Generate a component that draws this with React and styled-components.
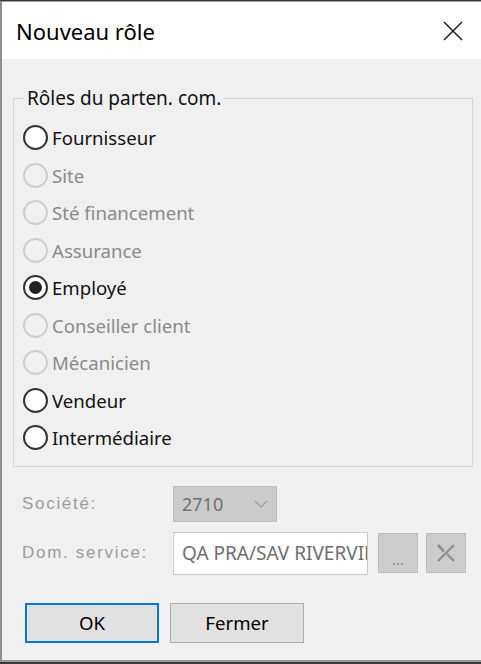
import React from "react";
import styled, { createGlobalStyle } from "styled-components";

const Global = createGlobalStyle`
  html, body { margin: 0; padding: 0; }
  body { background: #3a3a3a; font-family: "Noto Sans", "Open Sans", sans-serif; }
`;

const Screen = styled.div`
  width: 481px;
  height: 664px;
  overflow: hidden;
  padding-top: 1px;
  box-sizing: border-box;
`;

const Window = styled.div`
  height: 661px;
  box-sizing: border-box;
  border-left: 2px solid #8e8e8e;
  border-top: 1px solid #9a9a9a;
  border-bottom: 2px solid #9a9a9a;
  background: #f0f0f0;
  display: flex;
  flex-direction: column;
`;

const TitleBar = styled.div`
  height: 57px;
  flex-shrink: 0;
  background: #ffffff;
  display: flex;
  align-items: center;
  justify-content: space-between;
  padding: 0 18px 0 14px;
`;

const Title = styled.span`
  font-size: 22px;
  color: #000;
`;

const Content = styled.div`
  padding: 29px 8px 0 11px;
  display: flex;
  flex-direction: column;
`;

const Group = styled.fieldset`
  margin: 0;
  min-width: 0;
  border: 1px solid #d7d7d7;
  padding: 11px 9px 9px 9px;
`;

const Legend = styled.legend`
  font-size: 19px;
  line-height: 20px;
  padding: 0 3px;
  margin-left: 1px;
  color: #111;
`;

const Row = styled.div`
  height: 37.5px;
  display: flex;
  align-items: center;
  gap: 4px;
  font-size: 18.6px;
  color: ${(p) => (p.$disabled ? "#8a8a8a" : "#111")};
`;

const Circle = styled.span`
  width: 25px;
  height: 25px;
  box-sizing: border-box;
  border-radius: 50%;
  border: 2px solid ${(p) => (p.$disabled ? "#cdcdcd" : "#333")};
  background: ${(p) => (p.$disabled ? "#f0f0f0" : "#fff")};
  display: flex;
  align-items: center;
  justify-content: center;
  flex-shrink: 0;
`;

const Dot = styled.span`
  width: 13px;
  height: 13px;
  border-radius: 50%;
  background: #222;
`;

const Form = styled.div`
  margin-top: 19px;
  padding-left: 9px;
  display: grid;
  grid-template-columns: 151px 1fr;
  row-gap: 10px;
  align-items: center;
`;

const FieldLabel = styled.span`
  font-family: "Liberation Sans", Arial, sans-serif;
  font-size: 17px;
  letter-spacing: 1.7px;
  color: #9c9c9c;
`;

const Select = styled.div`
  width: 104px;
  height: 36px;
  box-sizing: border-box;
  background: #cbcbcb;
  border: 1px solid #bdbdbd;
  display: flex;
  align-items: center;
  justify-content: space-between;
  padding: 0 8px 0 8px;
  font-size: 18px;
  color: #707070;
`;

const Controls = styled.div`
  display: flex;
  align-items: center;
  height: 43px;
`;

const Input = styled.div`
  width: 195px;
  height: 43px;
  box-sizing: border-box;
  background: #fff;
  border: 1px solid #c9c9c9;
  padding: 0 8px;
  display: flex;
  align-items: center;
  overflow: hidden;
  white-space: nowrap;
  font-size: 19px;
  color: #6e6e6e;
`;

const SmallButton = styled.div`
  width: 40px;
  height: 40px;
  box-sizing: border-box;
  margin-left: ${(p) => p.$gap}px;
  background: #cccccc;
  border: 1px solid #bcbcbc;
  display: flex;
  align-items: center;
  justify-content: center;
  color: #8c8c8c;
`;

const Ellipsis = styled.span`
  font-size: 15px;
  line-height: 1;
  margin-top: 12px;
`;

const Buttons = styled.div`
  margin-top: 28px;
  padding-left: 12px;
  display: flex;
  gap: 11px;
`;

const Button = styled.div`
  width: 134px;
  height: 40px;
  box-sizing: border-box;
  background: #e1e1e1;
  border: ${(p) => (p.$default ? "2px solid #0078d7" : "1px solid #adadad")};
  display: flex;
  align-items: center;
  justify-content: center;
  font-size: 18.6px;
  color: #000;
`;

const roles = [
  { label: "Fournisseur" },
  { label: "Site", disabled: true },
  { label: "Sté financement", disabled: true },
  { label: "Assurance", disabled: true },
  { label: "Employé", checked: true },
  { label: "Conseiller client", disabled: true },
  { label: "Mécanicien", disabled: true },
  { label: "Vendeur" },
  { label: "Intermédiaire" },
];

const CloseIcon = () => (
  <svg width="20" height="20" viewBox="0 0 20 20">
    <path d="M1 1 L19 19 M19 1 L1 19" stroke="#222" strokeWidth="1.6" fill="none" />
  </svg>
);

const Chevron = () => (
  <svg width="14" height="8" viewBox="0 0 14 8">
    <path d="M1 1 L7 7 L13 1" stroke="#9c9c9c" strokeWidth="1.2" fill="none" />
  </svg>
);

const ClearIcon = () => (
  <svg width="24" height="24" viewBox="0 0 24 24">
    <path d="M4 4 L10 10.5" stroke="#8e8e8e" strokeWidth="2.6" fill="none" />
    <path d="M13 13 L20 20" stroke="#8e8e8e" strokeWidth="2.2" fill="none" />
    <path d="M20 4 L4 20" stroke="#8e8e8e" strokeWidth="2" fill="none" />
    <path d="M17 5 L19 7" stroke="#8e8e8e" strokeWidth="1.5" fill="none" />
  </svg>
);

export default function App() {
  return (
    <Screen>
      <Global />
      <Window>
        <TitleBar>
          <Title>Nouveau rôle</Title>
          <CloseIcon />
        </TitleBar>
        <Content>
          <Group>
            <Legend>Rôles du parten. com.</Legend>
            {roles.map((r) => (
              <Row key={r.label} $disabled={r.disabled}>
                <Circle $disabled={r.disabled}>{r.checked && <Dot />}</Circle>
                {r.label}
              </Row>
            ))}
          </Group>
          <Form>
            <FieldLabel>Société:</FieldLabel>
            <Select>
              <span>2710</span>
              <Chevron />
            </Select>
            <FieldLabel>Dom. service:</FieldLabel>
            <Controls>
              <Input>QA PRA/SAV RIVERVIEW</Input>
              <SmallButton $gap={10}>
                <Ellipsis>...</Ellipsis>
              </SmallButton>
              <SmallButton $gap={8}>
                <ClearIcon />
              </SmallButton>
            </Controls>
          </Form>
          <Buttons>
            <Button $default>OK</Button>
            <Button>Fermer</Button>
          </Buttons>
        </Content>
      </Window>
    </Screen>
  );
}
